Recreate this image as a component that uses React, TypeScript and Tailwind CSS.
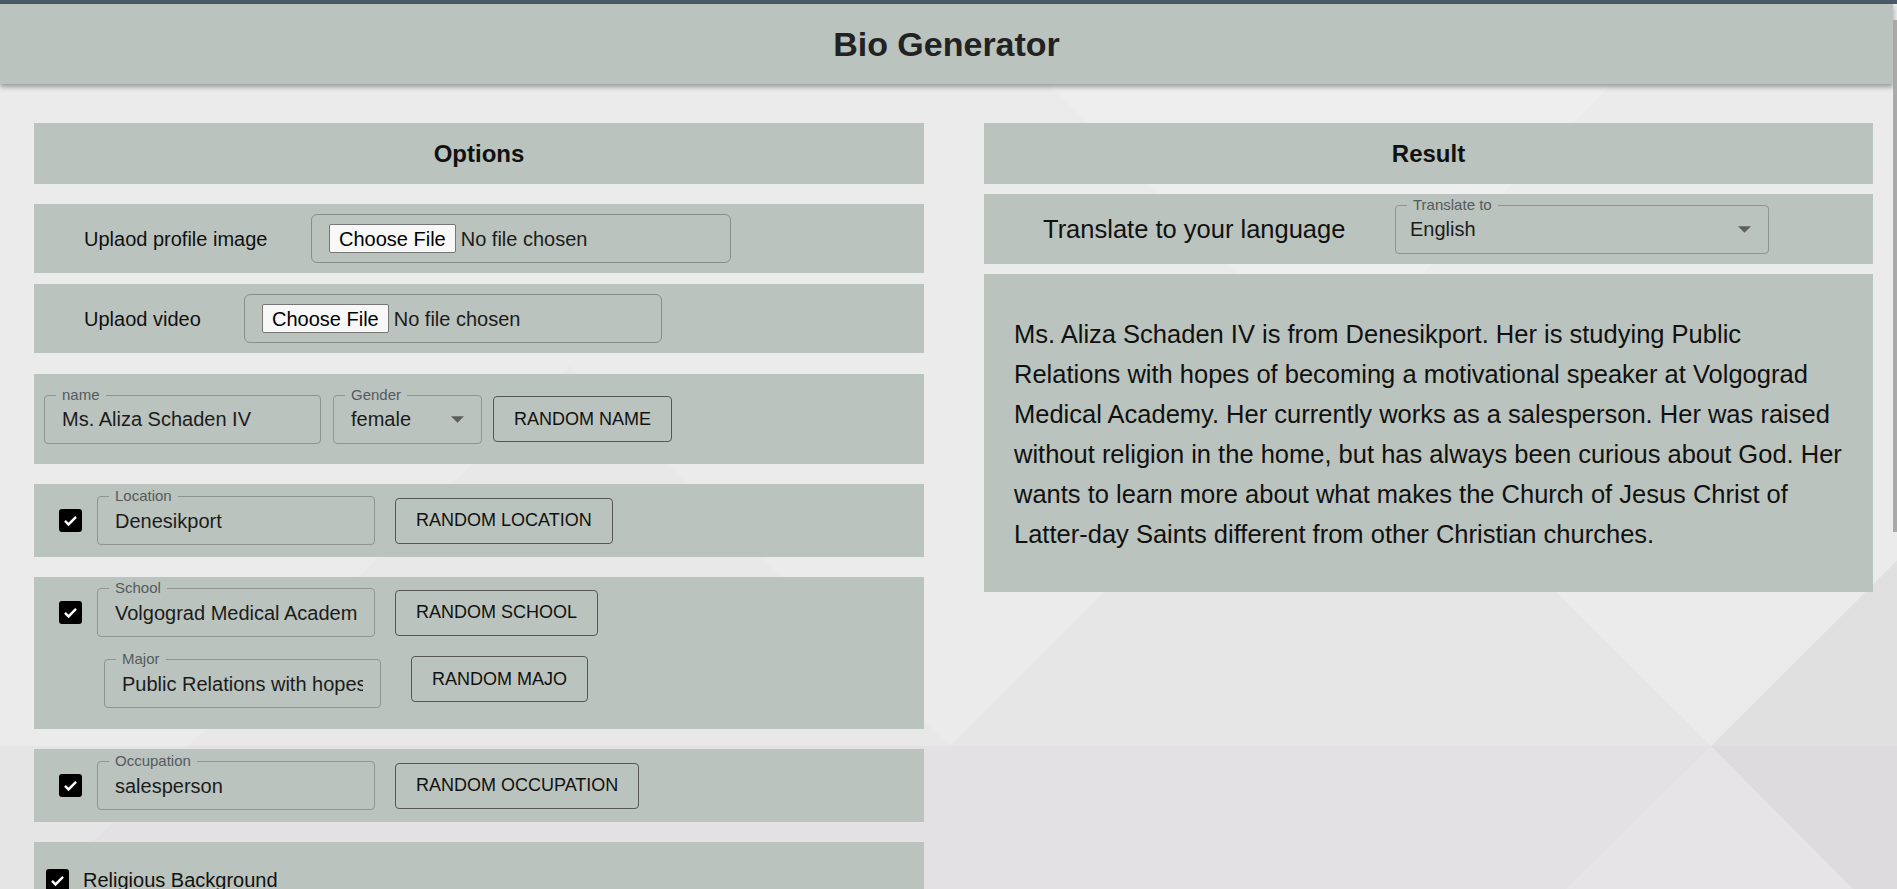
import React from "react";

const panel = "bg-[#bac3bd]";

function Check() {
  return (
    <span className="flex h-[23px] w-[23px] shrink-0 items-center justify-center rounded-[3px] bg-black">
      <svg viewBox="0 0 24 24" className="h-[19px] w-[19px]">
        <path d="M5 12.5l4.5 4.5L19 7.5" stroke="white" strokeWidth="3" fill="none" />
      </svg>
    </span>
  );
}

function Field({
  label,
  value,
  width,
  select = false,
  padLeft = "pl-[17px]",
}: {
  label: string;
  value: string;
  width: string;
  select?: boolean;
  padLeft?: string;
}) {
  return (
    <div
      className={`relative flex h-[49px] shrink-0 items-center rounded-[4px] border border-[#8f9692] ${padLeft} pr-[17px] ${width}`}
    >
      {/* label sits on the border, like an outlined text field */}
      <span className={`absolute -top-[10px] left-[11px] px-[6px] text-[15px] leading-[18px] text-[#555a60] ${panel}`}>
        {label}
      </span>
      <span className="min-w-0 flex-1 overflow-hidden whitespace-nowrap text-[20px] text-[#1c1c1c]">{value}</span>
      {select && (
        <svg viewBox="0 0 14 7" className="ml-2 h-[7px] w-[13px] shrink-0">
          <path d="M0 0h14L7 7z" fill="#5e5e5e" />
        </svg>
      )}
    </div>
  );
}

function RandomButton({ children, className = "" }: { children: React.ReactNode; className?: string }) {
  return (
    <button
      className={`h-[46px] shrink-0 rounded-[4px] border border-[#575757] px-[20px] text-[18px] uppercase text-[#111] ${className}`}
    >
      {children}
    </button>
  );
}

function FileBox({ width }: { width: string }) {
  return (
    <div className={`flex h-[49px] items-center rounded-[6px] border border-[#8a8f8b] pl-[17px] ${width}`}>
      <span className="flex h-[29px] items-center rounded-[2px] border border-[#767676] bg-[#f8f8f8] px-[9px] text-[20px] text-black">
        Choose File
      </span>
      <span className="ml-[5px] text-[20px] text-[#1c1c1c]">No file chosen</span>
    </div>
  );
}

function Background() {
  return (
    <svg className="absolute inset-0 h-full w-full" viewBox="0 0 1897 889" preserveAspectRatio="none">
      <rect x="0" y="0" width="1897" height="889" fill="#ebebeb" />
      <polygon points="1048,84 1612,84 1330,366" fill="#eeeeee" />
      <polygon points="189,746 950,746 570,366" fill="#e8e8e8" />
      <polygon points="950,746 1711,746 1330,366" fill="#e6e6e6" />
      <polygon points="1711,746 2092,366 2092,746" fill="#e0e0e0" />
      <polygon points="0,746 1897,746 1897,889 0,889" fill="#e3e1e4" />
      <polygon points="1711,746 1566,889 1853,889" fill="#e6e4e6" />
      <polygon points="1711,746 1897,746 1897,889 1853,889" fill="#dddbde" />
      <polygon points="0,746 189,746 0,935" fill="#e6e5e6" />
    </svg>
  );
}

export default function App() {
  return (
    <div className="relative h-[889px] w-full overflow-hidden font-['Liberation_Sans',Arial,sans-serif] text-[#111]">
      <Background />
      {/* thin overlay scrollbar */}
      <div className="absolute right-0 top-[20px] z-20 h-[512px] w-[4px] bg-[#a9a9a9]" />

      <div className="relative z-10">
        <div className="h-[4px] w-full bg-[#4a5a66]" />
        <div className="pr-[4px]">
          {/* Header */}
          <header
            className={`flex h-[80px] items-center justify-center shadow-[0_3px_5px_rgba(0,0,0,0.35)] ${panel}`}
          >
            <h1 className="text-[34px] font-bold text-[#222]">Bio Generator</h1>
          </header>

          <div className="flex pl-[34px] pt-[39px]">
            {/* Options column */}
            <div className="flex w-[890px] flex-col">
              <div className={`flex h-[61px] items-center justify-center ${panel}`}>
                <h2 className="text-[24px] font-bold">Options</h2>
              </div>

              <div className={`mt-[20px] flex h-[69px] items-center pl-[50px] ${panel}`}>
                <span className="w-[227px] shrink-0 text-[20px]">Uplaod profile image</span>
                <FileBox width="w-[420px]" />
              </div>

              <div className={`mt-[11px] flex h-[69px] items-center pl-[50px] ${panel}`}>
                <span className="w-[160px] shrink-0 text-[20px]">Uplaod video</span>
                <FileBox width="w-[418px]" />
              </div>

              <div className={`mt-[21px] flex h-[90px] items-center pl-[10px] ${panel}`}>
                <Field label="name" value="Ms. Aliza Schaden IV" width="w-[277px]" />
                <Field label="Gender" value="female" width="ml-[12px] w-[149px]" select />
                <RandomButton className="ml-[11px]">Random Name</RandomButton>
              </div>

              <div className={`mt-[20px] flex h-[73px] items-center pl-[25px] ${panel}`}>
                <Check />
                <Field label="Location" value="Denesikport" width="ml-[15px] w-[278px]" />
                <RandomButton className="ml-[20px]">Random Location</RandomButton>
              </div>

              <div className={`mt-[20px] flex h-[152px] flex-col ${panel}`}>
                <div className="mt-[11px] flex items-center pl-[25px]">
                  <Check />
                  <Field label="School" value="Volgograd Medical Academy" width="ml-[15px] w-[278px]" />
                  <RandomButton className="ml-[20px]">Random School</RandomButton>
                </div>
                <div className="mt-[22px] flex items-start pl-[70px]">
                  <Field
                    label="Major"
                    value="Public Relations with hopes of becoming a motivational speaker"
                    width="w-[277px]"
                  />
                  <RandomButton className="-mt-[3px] ml-[30px]">Random Majo</RandomButton>
                </div>
              </div>

              <div className={`mt-[20px] flex h-[73px] items-center pl-[25px] ${panel}`}>
                <Check />
                <Field label="Occupation" value="salesperson" width="ml-[15px] w-[278px]" />
                <RandomButton className="ml-[20px]">Random Occupation</RandomButton>
              </div>

              <div className={`mt-[20px] h-[120px] pl-[12px] pt-[23px] ${panel}`}>
                <div className="flex items-center gap-[14px]">
                  <Check />
                  <span className="text-[20px]">Religious Background</span>
                </div>
              </div>
            </div>

            {/* Result column */}
            <div className="ml-[60px] flex w-[889px] flex-col">
              <div className={`flex h-[61px] items-center justify-center ${panel}`}>
                <h2 className="text-[24px] font-bold">Result</h2>
              </div>

              <div className={`mt-[10px] flex h-[70px] items-center pl-[59px] ${panel}`}>
                <span className="w-[352px] shrink-0 text-[25.5px]">Translate to your language</span>
                <Field label="Translate to" value="English" width="w-[374px]" select padLeft="pl-[14px]" />
              </div>

              <div className={`mt-[10px] px-[30px] pb-[38px] pt-[40px] ${panel}`}>
                <p className="text-[25.5px] leading-[40px] text-[#111]">
                  Ms. Aliza Schaden IV is from Denesikport. Her is studying Public Relations with hopes of becoming a
                  motivational speaker at Volgograd Medical Academy. Her currently works as a salesperson. Her was
                  raised without religion in the home, but has always been curious about God. Her wants to learn more
                  about what makes the Church of Jesus Christ of Latter-day Saints different from other Christian
                  churches.
                </p>
              </div>
            </div>
          </div>
        </div>
      </div>
    </div>
  );
}
